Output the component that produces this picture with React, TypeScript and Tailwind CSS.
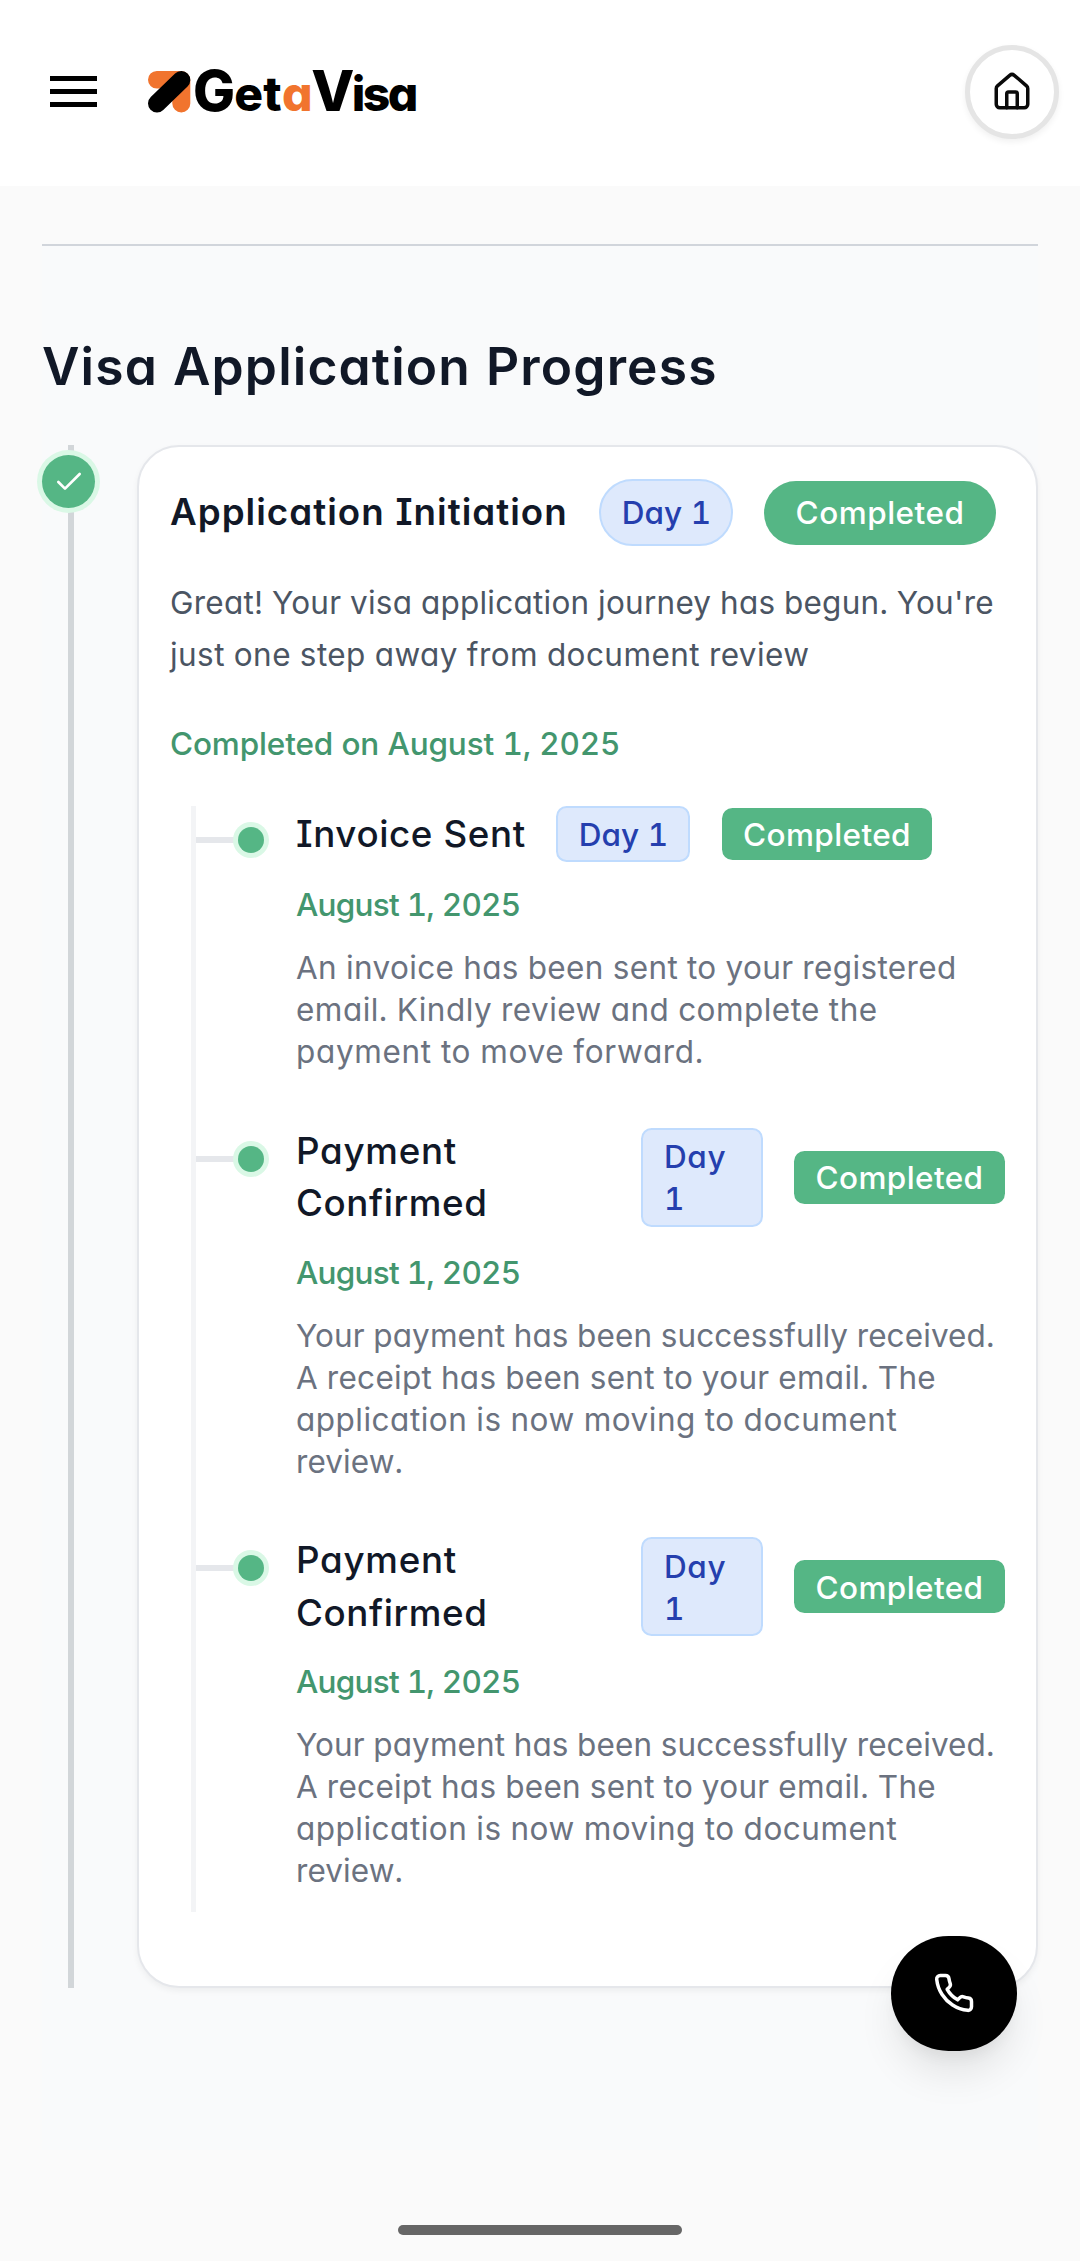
import { Check, House } from "lucide-react";

type Line = { text: string; tracking: string };

type Step = {
  title: Line[];
  wide: boolean;
  description: Line[];
};

const paymentStep: Step = {
  title: [
    { text: "Payment", tracking: "tracking-[0.7px]" },
    { text: "Confirmed", tracking: "tracking-[0.6px]" },
  ],
  wide: false,
  description: [
    { text: "Your payment has been successfully received.", tracking: "tracking-[0.1px]" },
    { text: "A receipt has been sent to your email. The", tracking: "tracking-[0.3px]" },
    { text: "application is now moving to document", tracking: "tracking-[0.5px]" },
    { text: "review.", tracking: "tracking-[0.1px]" },
  ],
};

const steps: Step[] = [
  {
    title: [{ text: "Invoice Sent", tracking: "tracking-[0.6px]" }],
    wide: true,
    description: [
      { text: "An invoice has been sent to your registered", tracking: "tracking-[0.38px]" },
      { text: "email. Kindly review and complete the", tracking: "tracking-[0.46px]" },
      { text: "payment to move forward.", tracking: "tracking-[0.66px]" },
    ],
  },
  paymentStep,
  paymentStep,
];

function Lines({ lines }: { lines: Line[] }) {
  return (
    <>
      {lines.map((line) => (
        <span key={line.text} className={`block whitespace-nowrap ${line.tracking}`}>
          {line.text}
        </span>
      ))}
    </>
  );
}

function LogoMark() {
  return (
    <svg width="43" height="42" viewBox="0 0 43 42" fill="none">
      <path
        d="M8.8 0H33.3a9 9 0 0 1 9 9V32.4a9 9 0 0 1-18 0V17.6H8.8a8.8 8.8 0 0 1 0-17.6Z"
        fill="#f1742e"
      />
      <path d="M9 32.4L33.3 9" stroke="#000" strokeWidth="18" strokeLinecap="round" />
    </svg>
  );
}

function Header() {
  return (
    <header className="flex h-[186px] items-center bg-white pr-[21px] pb-[2px] pl-[50px]">
      <div className="flex w-[47px] flex-col gap-[8px] pb-[2px]">
        <span className="h-[5px] bg-black" />
        <span className="h-[5px] bg-black" />
        <span className="h-[5px] bg-black" />
      </div>
      <div className="ml-[51px] flex items-center">
        <LogoMark />
        <div className="ml-[2px] flex items-baseline text-[48px] leading-[56px] font-extrabold text-black">
          <span className="text-[56px] tracking-[-1px]">G</span>
          <span className="tracking-[0.4px]">et</span>
          <span className="tracking-[-1.5px] text-[#f1742e]">a</span>
          <span className="text-[56px] tracking-[-2.5px]">V</span>
          <span className="tracking-[-2.6px]">isa</span>
        </div>
      </div>
      <div className="ml-auto flex size-[94px] items-center justify-center rounded-full border-[5px] border-[#e5e5e5] bg-white shadow-[0_3px_6px_rgba(0,0,0,0.06)]">
        <House size={42} strokeWidth={2} className="text-[#0a0a0a]" />
      </div>
    </header>
  );
}

function StepItem({ step }: { step: Step }) {
  return (
    <li className="relative pl-[100px]">
      <span className="absolute top-[31px] left-0 h-[6px] w-[42px] bg-[#e5e7eb]" />
      <span className="absolute top-[21px] left-[42px] size-[26px] rounded-full bg-[#55b685] ring-[5px] ring-[#daf8e6]" />
      {step.wide ? (
        <div className="flex h-[56px] items-center">
          <h4 className="w-[260px] text-[36.75px] leading-[52px] font-medium text-[#111827]">
            <Lines lines={step.title} />
          </h4>
          <span className="flex h-[56px] w-[134px] items-center justify-center rounded-[10.5px] border-2 border-[#bfdbfe] bg-[#dee9fc] pt-px pl-px font-medium tracking-[0.1px] whitespace-nowrap text-[#253fae]">
            Day 1
          </span>
          <span className="ml-[32px] flex h-[52px] w-[210px] items-center justify-center rounded-[10.5px] bg-[#55b685] pt-px font-medium tracking-[0.4px] text-white">
            Completed
          </span>
        </div>
      ) : (
        <div className="flex h-[105px] items-center">
          <h4 className="w-[345px] text-[36.75px] leading-[52.5px] font-medium text-[#111827]">
            <Lines lines={step.title} />
          </h4>
          <span className="flex h-[99px] w-[122px] items-center rounded-[10.5px] border-2 border-[#bfdbfe] bg-[#dee9fc] px-[21px] pt-[2px] font-medium tracking-[0.6px] text-[#253fae]">
            Day
            <br />1
          </span>
          <span className="ml-[31px] flex h-[53px] w-[211px] items-center justify-center rounded-[10.5px] bg-[#55b685] pt-[2px] font-medium tracking-[0.4px] text-white">
            Completed
          </span>
        </div>
      )}
      <p className="mt-[22px] font-medium tracking-[-0.75px] text-[#43966e]">August 1, 2025</p>
      <p className="mt-[21px] text-[#6b7280]">
        <Lines lines={step.description} />
      </p>
    </li>
  );
}

export default function App() {
  return (
    <div className="relative h-[2261px] w-[1080px] overflow-hidden bg-[#fafafa] font-['Inter',sans-serif] text-[31.5px] leading-[42px] [font-feature-settings:'cv11','cv08','tnum']">
      <Header />
      <main className="mx-[42px] mt-[58px] h-[1906px] border-t-2 border-[#d1d5db] bg-[#f9fafb] pt-[84px]">
        <h2 className="text-[51.5px] leading-[73px] font-semibold tracking-[1.15px] whitespace-nowrap text-[#111827]">
          Visa Application Progress
        </h2>
        <div className="mt-[42px] flex h-[1543px]">
          <div className="relative w-[95px] shrink-0 pt-[10px]">
            <span className="absolute inset-y-0 left-[26px] w-[6px] bg-[#d2d6d9]" />
            <span className="relative flex size-[53px] items-center justify-center rounded-full bg-[#55b685] text-white ring-[5px] ring-[#daf8e6]">
              <Check size={32} strokeWidth={2} />
            </span>
          </div>
          <section className="w-[901px] rounded-[42px] border-2 border-[#e5e7eb] bg-white pt-[32px] pl-[31px] shadow-[0_3px_6px_rgba(0,0,0,0.05)]">
            <div className="flex h-[67px] items-center">
              <h3 className="w-[429px] pb-px text-[36.75px] leading-[52px] font-semibold tracking-[1px] whitespace-nowrap text-[#111827]">
                Application Initiation
              </h3>
              <span className="flex h-[67px] w-[134px] items-center justify-center rounded-full border-2 border-[#bfdbfe] bg-[#dee9fc] pl-px font-medium tracking-[0.1px] whitespace-nowrap text-[#253fae]">
                Day 1
              </span>
              <span className="ml-[31px] flex h-[64px] w-[232px] items-center justify-center rounded-full bg-[#55b685] font-medium tracking-[0.5px] text-white">
                Completed
              </span>
            </div>
            <p className="mt-[31px] leading-[52px] text-[#4b5563]">
              <Lines
                lines={[
                  { text: "Great! Your visa application journey has begun. You're", tracking: "tracking-[0.24px]" },
                  { text: "just one step away from document review", tracking: "tracking-[0.43px]" },
                ]}
              />
            </p>
            <p className="mt-[42px] font-medium tracking-[-0.14px] text-[#43966e]">Completed on August 1, 2025</p>
            <ul className="mt-[41px] ml-[21px] flex h-[1106px] flex-col gap-[51.5px] border-l-[5px] border-[#f3f4f6]">
              {steps.map((step, index) => (
                <StepItem key={index} step={step} />
              ))}
            </ul>
          </section>
        </div>
      </main>
      <button
        aria-label="Call"
        className="absolute top-[1936px] left-[891px] flex h-[115px] w-[126px] items-center justify-center rounded-full bg-black text-white shadow-[0_26px_40px_-6px_rgba(0,0,0,0.10),0_10px_16px_-6px_rgba(0,0,0,0.06)]"
      >
        <svg width="42" height="42" viewBox="0 0 24 24" fill="none" stroke="currentColor" strokeWidth="2" strokeLinecap="round" strokeLinejoin="round" className="-mt-[2px]">
          <path d="M22 16.92v3a2 2 0 0 1-2.18 2 19.79 19.79 0 0 1-8.63-3.07 19.5 19.5 0 0 1-6-6 19.79 19.79 0 0 1-3.07-8.67A2 2 0 0 1 4.11 2h3a2 2 0 0 1 2 1.72 12.84 12.84 0 0 0 .7 2.81 2 2 0 0 1-.45 2.11L8.09 9.91a16 16 0 0 0 6 6l1.27-1.27a2 2 0 0 1 2.11-.45 12.84 12.84 0 0 0 2.81.7A2 2 0 0 1 22 16.92z" />
        </svg>
      </button>
      <span className="absolute top-[2225px] left-[398px] h-[10px] w-[284px] rounded-full bg-[#666666]" />
    </div>
  );
}
